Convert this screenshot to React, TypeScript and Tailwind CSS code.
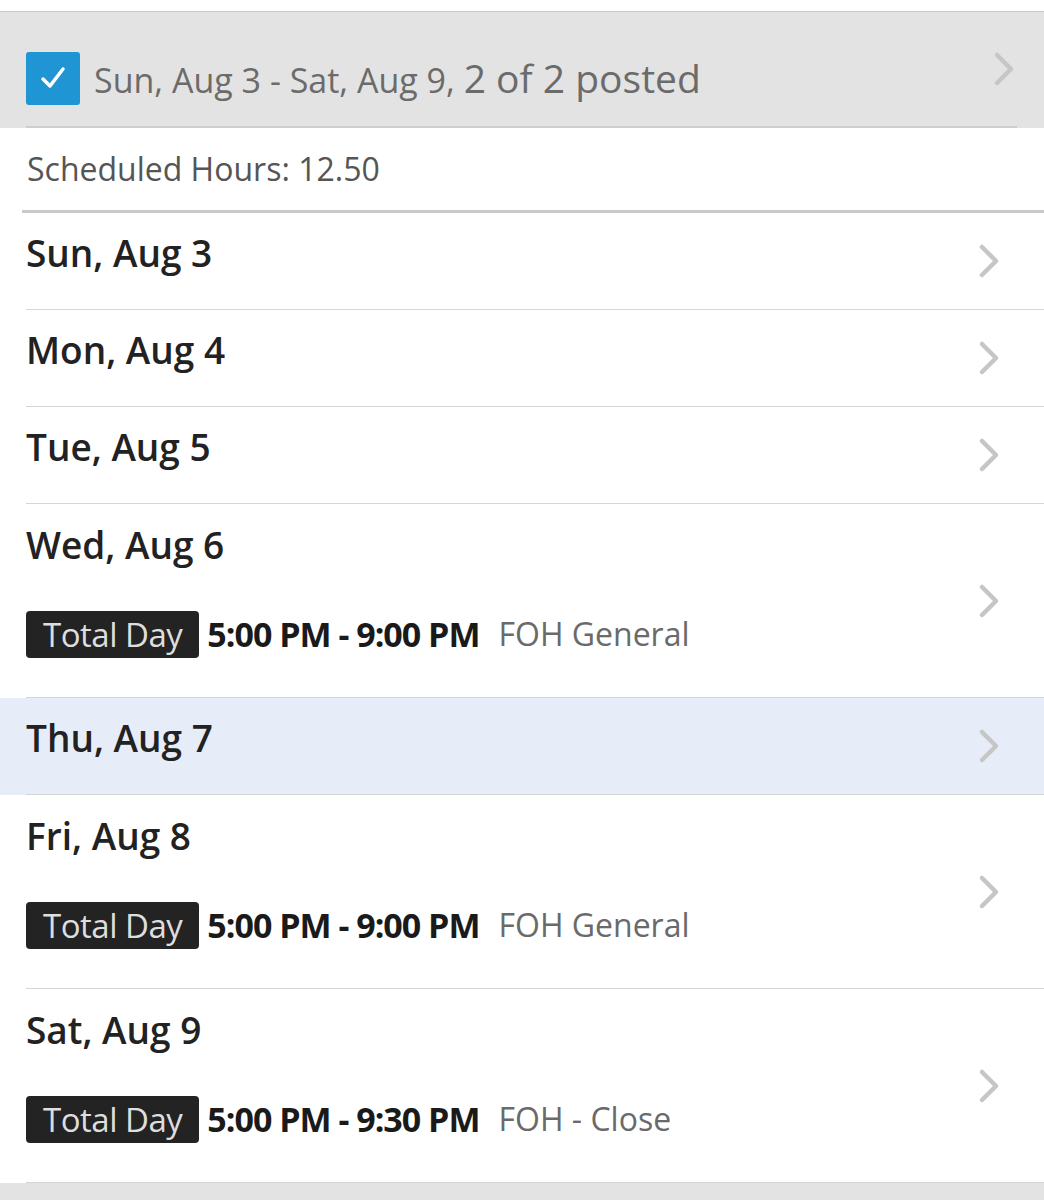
const days = [
  { id: 1, label: "Sun, Aug 3" },
  { id: 2, label: "Mon, Aug 4" },
  { id: 3, label: "Tue, Aug 5" },
  { id: 4, label: "Wed, Aug 6", shift: { time: "5:00 PM - 9:00 PM", role: "FOH General" } },
  { id: 5, label: "Thu, Aug 7", active: true },
  { id: 6, label: "Fri, Aug 8", shift: { time: "5:00 PM - 9:00 PM", role: "FOH General" } },
  { id: 7, label: "Sat, Aug 9", shift: { time: "5:00 PM - 9:30 PM", role: "FOH - Close" } }
];

const Chevron = () => (
  <svg width="24" height="36" viewBox="0 0 24 36" fill="none">
    <path d="M4 4 L18 18 L4 32" stroke="#c6c6c6" strokeWidth="4.5" strokeLinecap="round" strokeLinejoin="round" />
  </svg>
);

const DayRow = ({ day }: { day: any }) => {
  return (
    <div className={`${day.active ? "bg-[#e7edf8]" : "bg-white"}`}>
      <div
        className={`ml-[26px] flex items-center justify-between pr-[42px] border-b border-[#d6d6d6] ${
          day.shift ? "h-[194px]" : "h-[97px]"
        }`}
      >
        <div className="flex flex-col">
          <div className="text-[37px] font-semibold text-[#222] leading-[40px] -mt-[17px]">{day.label}</div>
          {day.shift && (
            <div className="flex items-center mt-[44px]">
              <span className="bg-[#232323] text-[#dedede] text-[33px] leading-[47px] px-[17px] rounded-[4px] tracking-[-0.5px] font-normal">
                Total Day
              </span>
              <span className="ml-[8px] text-[34px] font-bold text-[#1a1a1a] tracking-[-1px]">{day.shift.time}</span>
              <span className="ml-[19px] text-[32px] text-[#6a6a6a]">{day.shift.role}</span>
            </div>
          )}
        </div>
        <Chevron />
      </div>
    </div>
  );
};

export default function App() {
  return (
    <div className="w-[1044px] h-[1200px] bg-white overflow-hidden font-['Open_Sans',sans-serif]">
      <div className="h-[11px] bg-white" />
      {/* WEEK HEADER */}
      <div className="bg-[#e3e3e3] border-t border-[#c9c9c9]">
        <div className="ml-[26px] mr-[27px] h-[116px] pt-[18px] flex items-center justify-between border-b-2 border-[#cdcdcd]">
          <div className="flex items-center gap-[14px]">
            <div className="w-[54px] h-[53px] rounded-[3px] bg-[#1f95d3] flex items-center justify-center">
              <svg width="26" height="26" viewBox="0 0 26 26" fill="none">
                <path d="M3 14 L10 21 L23 4" stroke="white" strokeWidth="3.5" strokeLinecap="round" strokeLinejoin="round" />
              </svg>
            </div>
            <div className="text-[#6b6b6b] text-[34px]">
              Sun, Aug 3 - Sat, Aug 9, <span className="text-[39px]">2 of 2 posted</span>
            </div>
          </div>
          <div className="-mt-[18px]">
            <Chevron />
          </div>
        </div>
      </div>
      {/* HOURS */}
      <div className="ml-[22px] pl-[5px] h-[85px] flex items-center text-[32px] text-[#555] border-b-[3px] border-[#cacaca]">
        Scheduled Hours: 12.50
      </div>
      {/* DAYS */}
      {days.map((day) => (
        <DayRow key={day.id} day={day} />
      ))}
      <div className="bg-[#e3e3e3] h-[40px]" />
    </div>
  );
}
